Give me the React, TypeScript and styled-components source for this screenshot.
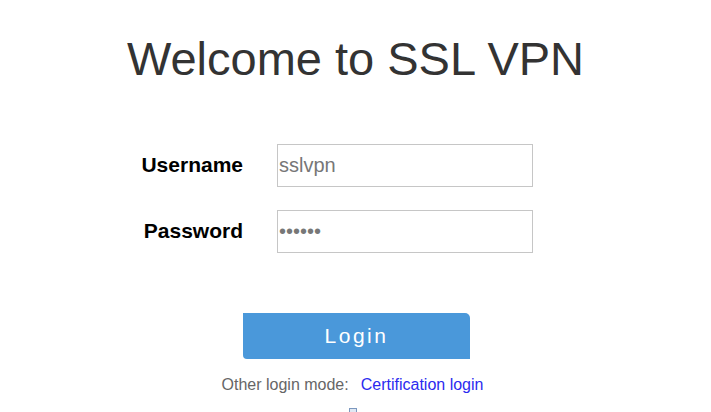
import React from "react";
import styled, { createGlobalStyle } from "styled-components";

const Global = createGlobalStyle`
  html, body { margin: 0; padding: 0; background: #fff; }
  body { font-family: "Liberation Sans", Arial, sans-serif; }
`;

const Page = styled.div`
  display: flex;
  flex-direction: column;
  align-items: center;
  width: 711px;
  min-height: 412px;
  & > * { flex-shrink: 0; }
`;

const Title = styled.h1`
  margin: 35px 0 0;
  font-size: 47px;
  line-height: 47px;
  font-weight: normal;
  color: #333;
`;

const Form = styled.div`
  display: grid;
  grid-template-columns: 100px 256px;
  column-gap: 34px;
  row-gap: 23px;
  align-items: center;
  margin: 62px 0 0 -35px;
`;

const Label = styled.label`
  justify-self: end;
  font-size: 21px;
  font-weight: bold;
  color: #000;
  margin-top: -2px;
`;

const Field = styled.input`
  box-sizing: border-box;
  width: 256px;
  height: 43px;
  margin: 0;
  padding: 0 0 0 1px;
  border: 1px solid #c6c6c6;
  border-radius: 0;
  outline: none;
  font-family: "Liberation Sans", Arial, sans-serif;
  font-size: 20px;
  color: #777;
  background: #fff;
`;

const Button = styled.button`
  box-sizing: border-box;
  margin: 60px 0 0 2px;
  width: 227px;
  height: 46px;
  border: none;
  border-radius: 0 5px 0 4px;
  background: #4a98da;
  color: #fff;
  font-family: "Liberation Sans", Arial, sans-serif;
  font-size: 21px;
  letter-spacing: 2.5px;
  cursor: pointer;
`;

const Other = styled.div`
  display: flex;
  gap: 12px;
  margin: 17px 0 0 -6px;
  font-size: 16px;
`;

const OtherLabel = styled.span`
  color: #666;
`;

const OtherLink = styled.a`
  color: #2b2bef;
  text-decoration: none;
`;

const Tiny = styled.span`
  display: block;
  width: 6px;
  height: 8px;
  margin: 14px 0 0 -6px;
  border: 1px solid #7c98bf;
  background: #dfe8f3;
`;

export default function App() {
  return (
    <Page>
      <Global />
      <Title>Welcome to SSL VPN</Title>
      <Form>
        <Label>Username</Label>
        <Field type="text" defaultValue="sslvpn" />
        <Label>Password</Label>
        <Field type="password" defaultValue="123456" />
      </Form>
      <Button>Login</Button>
      <Other>
        <OtherLabel>Other login mode:</OtherLabel>
        <OtherLink href="#">Certification login</OtherLink>
      </Other>
      <Tiny />
    </Page>
  );
}
